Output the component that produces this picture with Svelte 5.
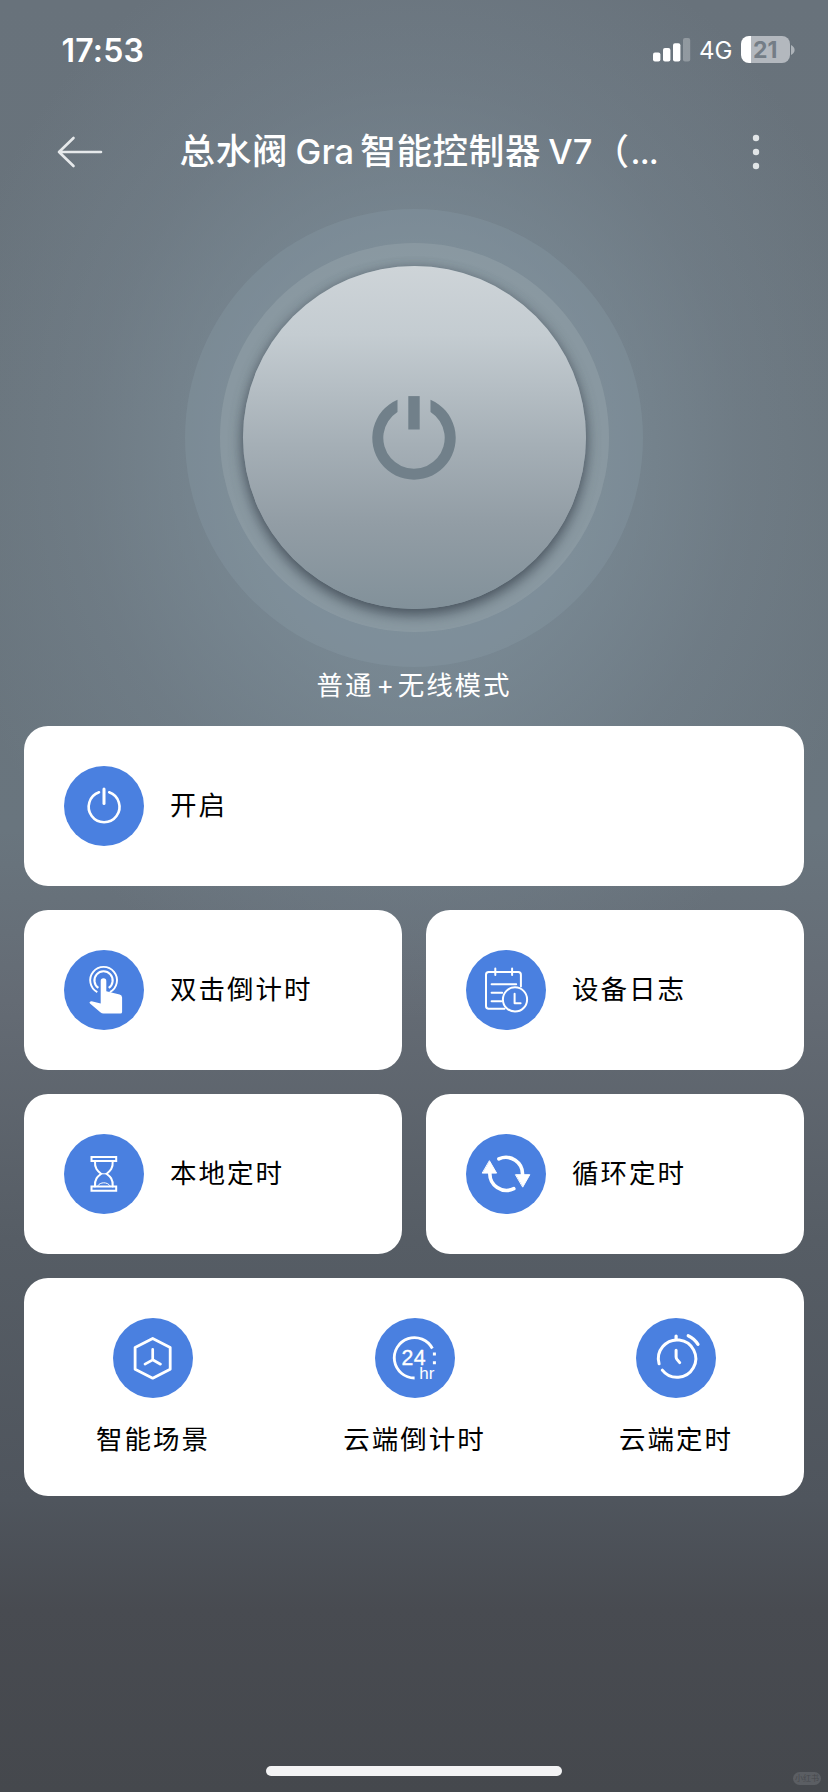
<script>
  const tiles = [
    { icon: 'power', label: '开启', wide: true },
    { icon: 'tap', label: '双击倒计时' },
    { icon: 'log', label: '设备日志' },
    { icon: 'hourglass', label: '本地定时' },
    { icon: 'cycle', label: '循环定时' }
  ];
  const cloud = [
    { icon: 'scene', label: '智能场景' },
    { icon: 'day', label: '云端倒计时' },
    { icon: 'clock', label: '云端定时' }
  ];
</script>

{#snippet glyph(name)}
  <svg class="badge" viewBox="0 0 80 80" width="80" height="80" fill="none" stroke="#fff" stroke-linecap="round" stroke-linejoin="round">
    <circle cx="40" cy="40" r="40" fill="#4a80e0" stroke="none" />
    {#if name === 'power'}
      <path d="M35 26.3A15.4 15.4 0 1 0 45.2 26.3" stroke-width="2.6" />
      <path d="M40 23V37.5" stroke-width="3" />
    {:else if name === 'tap'}
      <path d="M33.3 42.1A13.4 13.4 0 1 1 45.9 42.1" stroke-width="1.9" stroke-linecap="butt" />
      <path d="M34.4 37.9A9.1 9.1 0 1 1 44.7 37.9" stroke-width="2.1" stroke-linecap="butt" />
      <path d="M36.7 31a2.8 2.8 0 0 1 5.6 0V41.3L55.6 44.6Q58 45.3 58.1 47.5V62Q58.1 63.6 56.4 63.6H39.5Q37.8 63.6 36.3 62.2L26 53.6Q25 52.6 26 51.8Q27 51 28.6 51.5L36.7 53.6Z" fill="#fff" stroke="none" />
    {:else if name === 'log'}
      <path d="M54.9 36.5V24.8Q54.9 22.1 52.2 22.1H22.7Q20 22.1 20 24.8V56Q20 58.8 22.7 58.8H38.5" stroke-width="2" />
      <path d="M29.3 18.4V25M46.1 18.4V25" stroke-width="2" />
      <path d="M25.6 34.2H50.2M25.6 42.8H36.2M25.6 51.2H35.4" stroke-width="2" />
      <circle cx="49" cy="49.4" r="12.1" stroke-width="2" />
      <path d="M48.6 43.8V53.2H54.6" stroke-width="2" />
    {:else if name === 'hourglass'}
      <g stroke-width="2" stroke-linejoin="miter">
        <path d="M27.5 23H52.2V27H27.5ZM27.5 52.6H52.2V56.8H27.5Z" />
        <path d="M31 27C30.5 34.5 33.5 36.8 37.2 39.8C33.5 42.6 30.5 45 31 52.4M48.7 27C49.2 34.5 46.2 36.8 42.5 39.8C46.2 42.6 49.2 45 48.7 52.4" />
        <path d="M36.5 39.8H43.2M34 51.5C36 47.8 43.5 47.8 45.8 51.5" stroke-width="1" />
      </g>
    {:else if name === 'cycle'}
      <path d="M32.9 24.9A16.7 16.7 0 0 1 56.5 41M47.8 54.7A16.7 16.7 0 0 1 23.9 38.5" stroke-width="3.6" />
      <path d="M49.8 40.7H63.8L56.9 52.8ZM16.6 39.1H30.6L23.6 27Z" fill="#fff" stroke-width="1" />
    {:else if name === 'scene'}
      <path d="M39.7 20.4L57.2 29.6V51.2L39.7 60.2L22.1 51.2V29.6Z" stroke-width="2.8" />
      <path d="M39.7 31.4V41.8L32 46.2M39.7 41.8L47.5 46.2" stroke-width="2.7" />
    {:else if name === 'day'}
      <path d="M57.4 30.5A20.2 20.2 0 1 0 39.6 60" stroke-width="2.8" stroke-linecap="butt" />
      <path d="M57.9 34.5h3v3h-3zM57.9 43.2h3v3h-3z" fill="#fff" stroke="none" />
      <text x="26.4" y="47.2" font-size="21.3" letter-spacing=".5" fill="#fff" stroke-width=".35">24</text>
      <text x="44.2" y="61.4" font-size="17" fill="#fff" stroke="none">hr</text>
    {:else}
      <path d="M23.1 45.8A18.7 18.7 0 1 1 26.3 52.1" stroke-width="3" />
      <path d="M40.1 18V21" stroke-width="3.2" />
      <path d="M52.2 17.7Q58.3 20.5 62 26.4" stroke-width="3.2" />
      <path d="M40.1 32.2V39Q40.2 40.4 41 41.4L43.7 44.6" stroke-width="3" />
    {/if}
  </svg>
{/snippet}

<div class="screen">
  <header class="status">
    <span class="time">17:53</span>
    <div class="indicators">
      <svg width="38" height="24" viewBox="0 0 38 24" fill="#fff">
        <rect x="0" y="14.5" width="7.4" height="9" rx="2" />
        <rect x="10" y="10" width="7.4" height="13.5" rx="2" />
        <rect x="20" y="5.2" width="7.4" height="18.3" rx="2" />
        <rect x="30" y="0" width="7.2" height="23.5" rx="2" opacity=".27" />
      </svg>
      <span class="net">4G</span>
      <div class="battery"><span>21</span></div>
      <svg class="nub" width="4" height="10" viewBox="0 0 4 10"><path d="M0 0Q3.6 2 3.6 5T0 10Z" fill="#adb3b9" /></svg>
    </div>
  </header>

  <nav>
    <svg width="46" height="34" viewBox="0 0 46 34" fill="none" stroke="#e6e9eb" stroke-width="2.6" stroke-linecap="round" stroke-linejoin="round">
      <path d="M44 17H2M16.5 3L2 17L16.5 31" />
    </svg>
    <h1>总水阀<span class="latin">Gra</span>智能控制器<span class="latin model">V7</span>（<span class="more">...</span></h1>
    <svg width="8" height="36" viewBox="0 0 8 36" fill="#e1e5e7">
      <circle cx="4" cy="4" r="3.2" /><circle cx="4" cy="18" r="3.2" /><circle cx="4" cy="32" r="3.2" />
    </svg>
  </nav>

  <div class="halo">
    <div class="ring">
      <div class="knob">
        <svg width="84" height="84" viewBox="-42 -42 84 84" fill="#71808a">
          <path d="M-16.5 -38.3A41.7 41.7 0 1 0 16.5 -38.3V-25.9A30.7 30.7 0 1 1 -16.5 -25.9Z" />
          <rect x="-5.7" y="-41.9" width="11.4" height="33.4" />
        </svg>
      </div>
    </div>
  </div>
  <p class="mode">普通<span>+</span>无线模式</p>

  <main>
    {#each tiles as t}
      <section class="tile" class:wide={t.wide}>
        {@render glyph(t.icon)}
        <span class="label">{t.label}</span>
      </section>
    {/each}
    <section class="cloud">
      {#each cloud as c}
        <div class="entry">
          {@render glyph(c.icon)}
          <span class="label">{c.label}</span>
        </div>
      {/each}
    </section>
  </main>

  <footer>
    <i class="home"></i>
    <span class="mark">小红书</span>
  </footer>
</div>

<style>
  :global(body) { margin: 0; }
  .screen {
    box-sizing: border-box;
    width: 828px;
    height: 1792px;
    position: relative;
    overflow: hidden;
    display: flex;
    flex-direction: column;
    font-family: Inter, 'Noto Sans CJK SC', sans-serif;
    color: #fff;
    background:
      radial-gradient(ellipse 480px 560px at 414px 460px, rgba(134, 154, 166, .75) 0%, rgba(130, 148, 160, .62) 35%, rgba(122, 137, 149, .34) 68%, rgba(110, 125, 135, 0) 100%),
      linear-gradient(#68727b 0, #69747c 440px, #69757e 830px, #646b74 1000px, #565d65 1240px, #4f555d 1500px, #484b51 1610px, #45484d 1792px);
  }
  .status {
    height: 100px;
    display: flex;
    justify-content: space-between;
    box-sizing: border-box;
    padding: 0 33px 0 61.5px;
  }
  .time { font-size: 32px; font-weight: 600; line-height: 101px; letter-spacing: .2px; }
  .indicators { display: flex; align-items: center; height: 99px; }
  .net { font-size: 24px; width: 34px; margin: 2px 0 0 8px; font-weight: 400; }
  .battery {
    margin-left: 8px;
    width: 48.5px;
    height: 27px;
    border-radius: 8px;
    background: linear-gradient(90deg, #fff 10px, #b3b8be 10px);
    color: #747d86;
    font-size: 23px;
    font-weight: 700;
    line-height: 28px;
    text-align: center;
  }
  .nub { margin-left: 1.5px; }
  nav {
    height: 104px;
    display: flex;
    align-items: center;
    box-sizing: border-box;
    padding: 0 68px 0 57px;
  }
  h1 {
    margin: 0 auto 0 76.5px;
    font-size: 35.5px;
    font-weight: 500;
    line-height: 50px;
    letter-spacing: .7px;
    white-space: nowrap;
  }
  .latin { margin: 0 6px 0 7.5px; font-size: 34.5px; letter-spacing: 0; }
  .model { margin: 0 1px 0 7px; }
  .more { margin-left: 1px; font-size: 33px; letter-spacing: -.9px; }
  .halo, .ring, .knob { display: flex; align-items: center; justify-content: center; border-radius: 50%; flex: none; }
  .halo {
    align-self: center;
    width: 458px;
    height: 458px;
    margin-top: 4.5px;
    background: rgba(142, 162, 172, .26);
  }
  .ring { width: 389px; height: 389px; background: rgba(152, 167, 174, .45); }
  .knob {
    width: 343px;
    height: 343px;
    background: linear-gradient(#ced4d8, #c4ccd1 20%, #a5afb6 52%, #929da5 75%, #82919a);
    box-shadow: 0 6px 14px rgba(55, 64, 75, .75), 0 0 10px rgba(70, 80, 92, .25);
  }
  .mode {
    margin: -1.5px 0 0;
    height: 40px;
    line-height: 40px;
    text-align: center;
    font-size: 26.5px;
    letter-spacing: 1.9px;
  }
  .mode span { margin: 0 2px 0 3px; }
  main {
    margin: 21px 24px 0;
    display: grid;
    grid-template-columns: 1fr 1fr;
    gap: 24px;
    color: #000;
  }
  .tile, .cloud { background: #fff; border-radius: 24px; box-sizing: border-box; }
  .tile { height: 160px; padding-left: 40px; display: flex; align-items: center; gap: 26px; }
  .wide, .cloud { grid-column: 1 / -1; }
  .label { font-size: 26.5px; letter-spacing: 2px; line-height: 38px; padding-bottom: 2px; white-space: nowrap; }
  .cloud { height: 218px; padding: 40px 71px 0 72px; display: flex; justify-content: space-between; }
  .entry { display: flex; flex-direction: column; align-items: center; gap: 22px; }
  .badge { display: block; flex: none; }
  .badge text { font-family: 'Liberation Sans', sans-serif; }
  .home {
    position: absolute;
    left: 266px;
    bottom: 16px;
    width: 296px;
    height: 10px;
    border-radius: 5px;
    background: #f3f3f4;
  }
  .mark {
    position: absolute;
    right: 7px;
    bottom: 7px;
    width: 28px;
    height: 13px;
    border-radius: 7px;
    background: #5b5e63;
    color: #47494e;
    font-size: 8px;
    line-height: 12px;
    text-align: center;
  }
</style>
